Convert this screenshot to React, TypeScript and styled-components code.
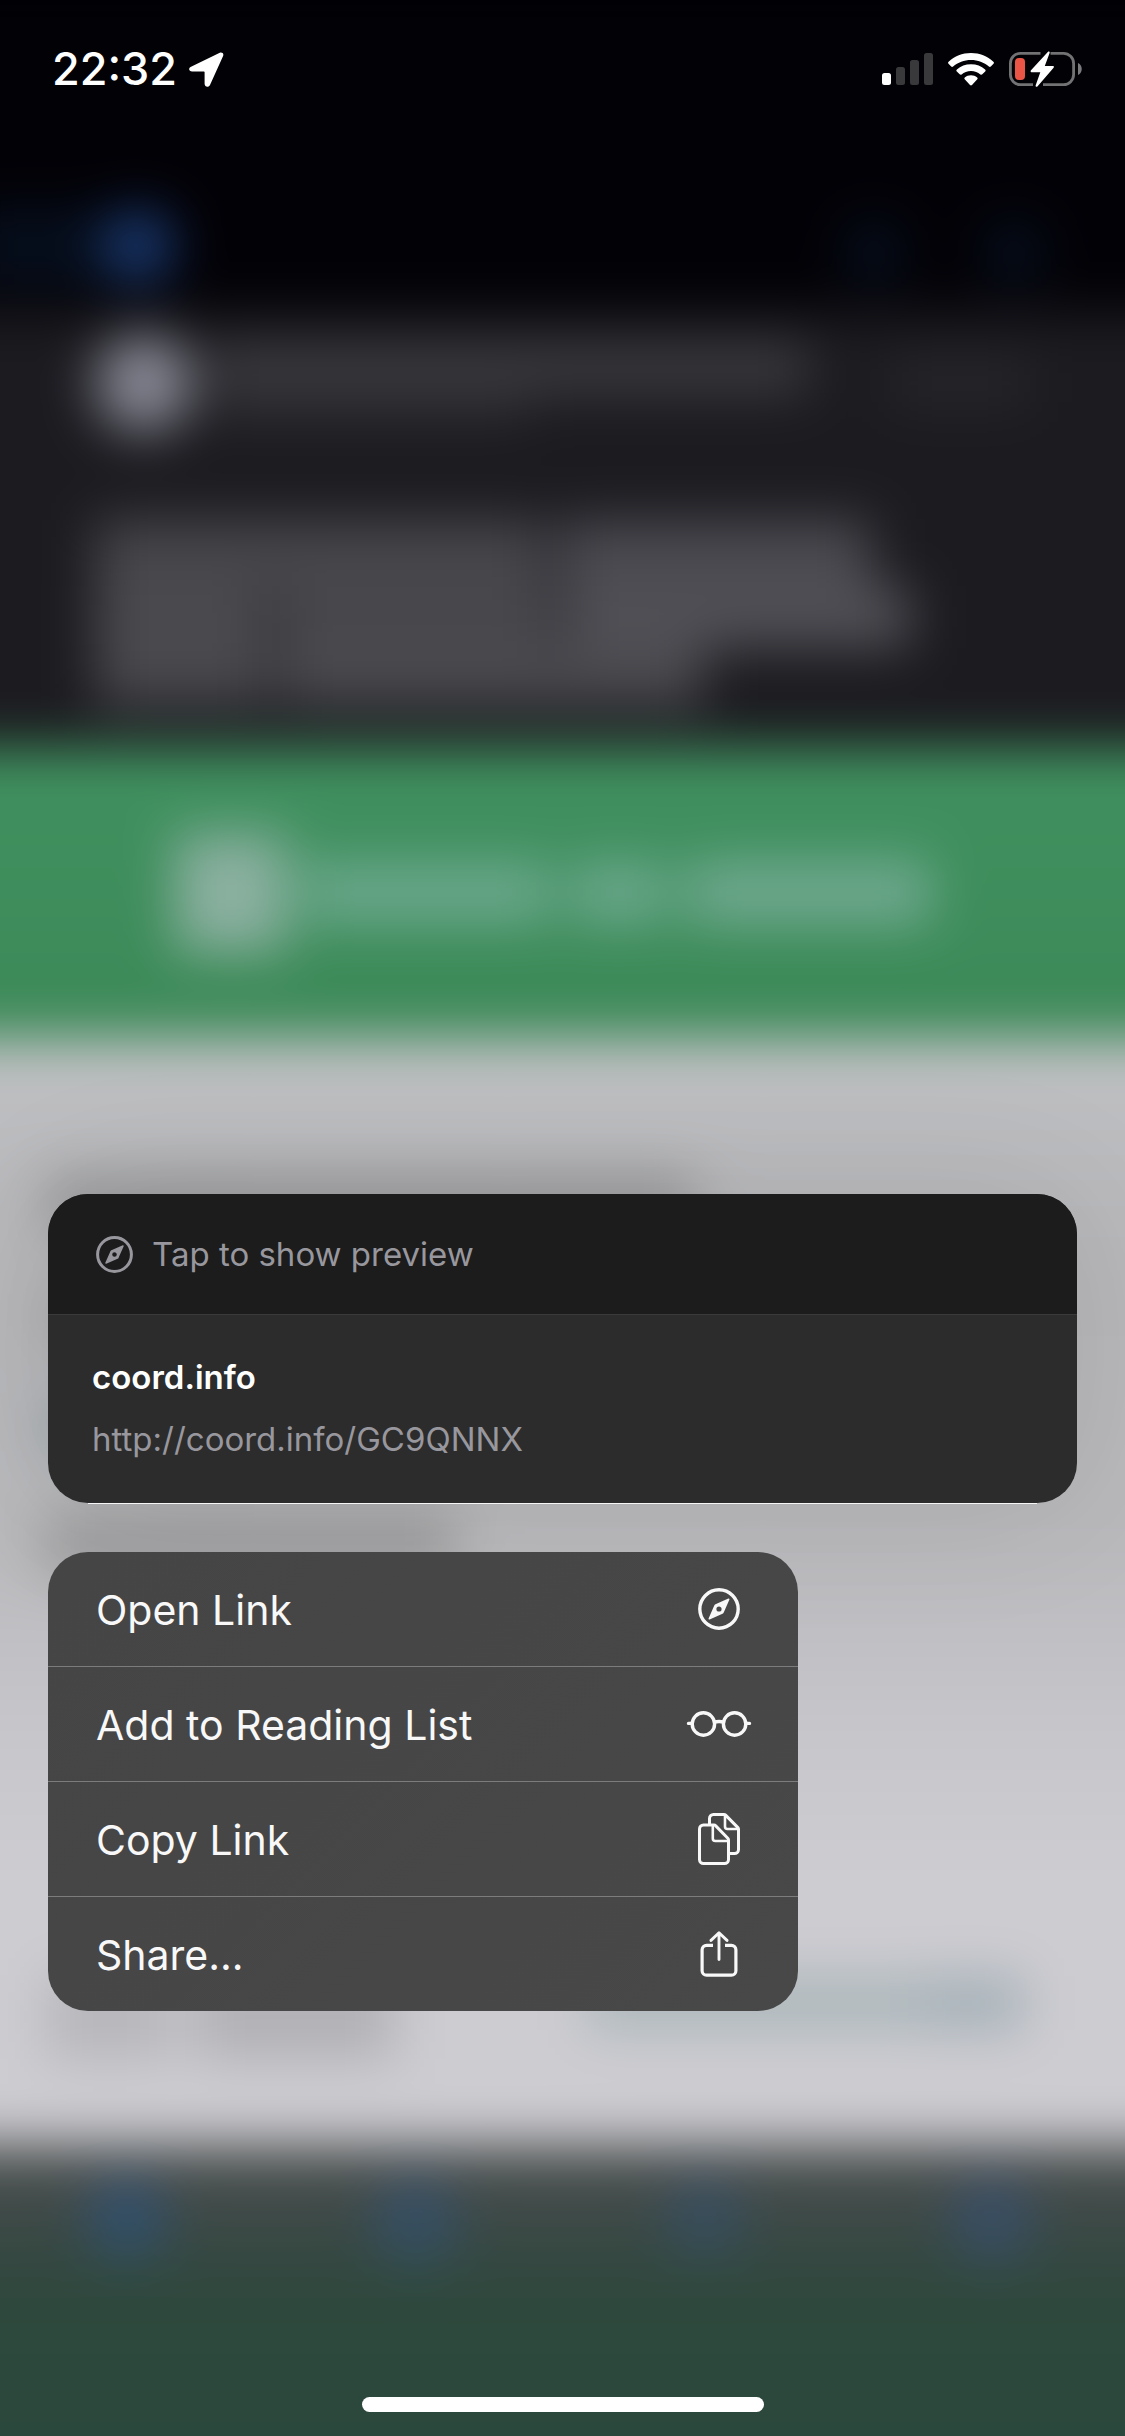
import React from "react";
import styled, { createGlobalStyle } from "styled-components";

const GlobalStyle = createGlobalStyle`
  *, *::before, *::after { box-sizing: border-box; }
  html, body { margin: 0; background: #020106; }
  body { font-family: Inter, Roboto, "Liberation Sans", sans-serif; }
  button { font: inherit; border: 0; margin: 0; cursor: pointer; }
  svg { display: block; flex: none; }
`;

const Screen = styled.div`
  position: relative;
  display: flex;
  flex-direction: column;
  min-height: 100vh;
  overflow: hidden;
  color: #fff;
`;

/* ---------- blurred page behind the menu ---------- */

const Backdrop = styled.div`
  position: absolute;
  inset: 0 -80px -80px;
  display: flex;
  flex-direction: column;
  background: #020106;
  filter: blur(26px);
`;

const NavStrip = styled.div`
  display: flex;
  align-items: flex-end;
  justify-content: space-between;
  height: 312px;
  padding: 0 160px 30px 0;
`;

const BackGroup = styled.div`
  display: flex;
  align-items: center;
  padding-left: 50px;
`;

const Faint = styled.div`
  width: 132px;
  height: 70px;
  background: #060f1e;
`;

const NavActions = styled.div`
  display: flex;
  gap: 78px;
`;

const Dot = styled.div<{ $size: number; $color: string }>`
  width: ${(p) => p.$size}px;
  height: ${(p) => p.$size}px;
  border-radius: 50%;
  background: ${(p) => p.$color};
`;

const MessageHeader = styled.div`
  display: flex;
  flex-direction: column;
  gap: 88px;
  height: 436px;
  padding: 22px 175px 0;
  background: #1c1b20;
`;

const Sender = styled.div`
  display: flex;
  gap: 16px;
  align-items: center;
`;

const Lines = styled.div`
  display: flex;
  flex-direction: column;
  align-items: flex-start;
  flex: 1;
`;

const Bar = styled.div<{ $w: number; $h: number; $color: string }>`
  width: ${(p) => p.$w}px;
  height: ${(p) => p.$h}px;
  background: ${(p) => p.$color};
`;

const Words = styled.div<{ $gap: number }>`
  display: flex;
  gap: ${(p) => p.$gap}px;
`;

const Banner = styled.div`
  display: flex;
  align-items: center;
  justify-content: center;
  gap: 14px;
  height: 290px;
  padding: 0 20px 0 0;
  background: linear-gradient(#409160, #3c8957);
`;

const Page = styled.div`
  display: flex;
  flex-direction: column;
  flex: 1;
  justify-content: space-between;
  padding: 134px 80px 86px 125px;
  background: linear-gradient(#bfc0c3, #b8b8bb 200px, #b9b9bc 500px, #c7c6cb 700px, #cdccd1 840px);
`;

const Paragraph = styled.div`
  display: flex;
  flex-direction: column;
  gap: 60px;
`;

const Split = styled.div`
  display: flex;
  justify-content: space-between;
  padding-right: 100px;
`;

const Toolbar = styled.div`
  display: flex;
  justify-content: space-between;
  align-items: flex-start;
  height: 371px;
  padding: 34px 172px 0 168px;
  background: linear-gradient(#505253, #3b4845 80px, #2d483c 160px, #2a473b);
`;

/* ---------- status bar ---------- */

const Foreground = styled.div`
  position: relative;
  display: flex;
  flex-direction: column;
  flex: 1;
`;

const StatusBar = styled.header`
  display: flex;
  align-items: center;
  justify-content: space-between;
  height: 138px;
  padding: 0 43px 0 52px;
`;

const StatusGroup = styled.div<{ $gap: number }>`
  display: flex;
  align-items: center;
  gap: ${(p) => p.$gap}px;
`;

const Clock = styled.time`
  font-size: 45px;
  line-height: 56px;
  font-weight: 500;
`;

/* ---------- preview card and menu ---------- */

const Main = styled.main`
  display: flex;
  flex-direction: column;
  justify-content: flex-end;
  flex: 1;
  padding: 0 48px 386px;
`;

const PreviewCard = styled.section`
  overflow: hidden;
  border-radius: 40px;
  background: #2c2c2c;
  box-shadow: 0 0 140px rgba(0, 0, 0, 0.1);
`;

const PreviewToggle = styled.button`
  display: flex;
  align-items: center;
  gap: 19px;
  width: 100%;
  height: 121px;
  padding: 0 48px;
  border-bottom: 1px solid #3a3a3b;
  background: #1c1c1c;
  color: #98979e;
  font-size: 33px;
  line-height: 62px;
`;

const LinkInfo = styled.a`
  display: flex;
  flex-direction: column;
  height: 188px;
  padding: 31px 44px;
  color: #98979e;
  font-size: 33px;
  line-height: 62px;
  text-decoration: none;
`;

const Domain = styled.strong`
  color: #fff;
  font-weight: 600;
`;

const Highlight = styled.div`
  height: 1px;
  margin: 0 40px 48px;
  background: #f6f6f8;
`;

const Menu = styled.ul`
  width: 750px;
  max-width: 100%;
  margin: 0;
  padding: 0;
  overflow: hidden;
  list-style: none;
  border-radius: 40px;
  background: linear-gradient(135deg, #454546, #484849);
`;

const MenuItem = styled.li`
  & + & {
    border-top: 1px solid #7c7c7e;
  }
`;

const MenuButton = styled.button`
  display: flex;
  align-items: center;
  justify-content: space-between;
  width: 100%;
  height: 114px;
  padding: 0 46px 0 48px;
  background: none;
  color: #f8f8f8;
  font-size: 41px;
  line-height: 52px;
`;

const MenuLabel = styled.span`
  padding-top: 2px;
`;

const IconSlot = styled.span`
  display: flex;
  justify-content: center;
  width: 66px;
`;

const HomeArea = styled.footer`
  display: flex;
  justify-content: center;
  padding-bottom: 24px;
`;

const HomeIndicator = styled.div`
  width: 402px;
  height: 15px;
  border-radius: 8px;
  background: #fff;
`;

/* ---------- icons ---------- */

const CompassIcon = ({ size }: { size: number }) => (
  <svg width={size} height={size} viewBox="0 0 42 42" fill="none" aria-hidden="true">
    <circle cx="21" cy="21" r="19.2" stroke="currentColor" strokeWidth="3.4" />
    <path
      fillRule="evenodd"
      fill="currentColor"
      stroke="currentColor"
      strokeWidth="1.6"
      strokeLinejoin="round"
      d="M30.7 11.3 25 24.2q-.3.6-.8.9L11.3 30.7 17 17.8q.3-.6.8-.9ZM21 17.6a3.4 3.4 0 1 0 0 6.8 3.4 3.4 0 0 0 0-6.8Z"
    />
  </svg>
);

const GlassesIcon = () => (
  <svg width="66" height="28" viewBox="0 0 66 28" fill="none" stroke="currentColor" strokeWidth="3.4" aria-hidden="true">
    <circle cx="17.400" cy="14" r="11.200" />
    <circle cx="48.600" cy="14" r="11.200" />
    <path d="M28 12.200Q33 10.800 38 12.200" />
    <path d="M2.500 13.400H6M60 13.400H63.500" strokeLinecap="round" />
  </svg>
);

const CopyIcon = () => (
  <svg width="42" height="52" viewBox="0 0 42 52" fill="none" stroke="currentColor" strokeWidth="3" strokeLinejoin="round" aria-hidden="true">
    <path d="M16 12H5.500a4 4 0 0 0-4 4V46.500a4 4 0 0 0 4 4H26.500a4 4 0 0 0 4-4V27Q30.500 26 29.800 25.300L17.500 12.600Q17 12 16 12Z" />
    <path d="M14.800 12.500V25.500Q14.800 28 17.300 28H30" strokeWidth="2.600" />
    <path d="M11.500 11V5.500a4 4 0 0 1 4-4H26Q27 1.500 27.600 2.100L39.900 14.600Q40.500 15.200 40.500 16.200V36.500a4 4 0 0 1-4 4H32" />
    <path d="M27 2.500V13.500Q27 16 29.500 16H40" strokeWidth="2.600" />
  </svg>
);

const ShareIcon = () => (
  <svg width="38" height="46" viewBox="0 0 38 46" fill="none" stroke="currentColor" strokeWidth="3.2" aria-hidden="true">
    <path d="M13 14.300H6.600a4.500 4.500 0 0 0-4.500 4.500V39.700a4.500 4.500 0 0 0 4.500 4.500H31.400a4.500 4.500 0 0 0 4.500-4.500V18.800a4.500 4.500 0 0 0-4.500-4.500H25" />
    <path d="M19 2.400V28.500M11 9.400 19 1.700 27 9.400" strokeWidth="2.900" strokeLinecap="round" strokeLinejoin="round" />
  </svg>
);

const LocationIcon = () => (
  <svg width="35" height="35" viewBox="0 0 35 35" aria-hidden="true">
    <path
      fill="#fff"
      d="M2 14.700 30.800.7c2-.9 4.400.7 3.300 3.300L21 33c-1.200 2.700-5.400 2.300-5.400-1.200V20.200c0-.5-.2-.7-.7-.7H3.200C-.4 19.500-.8 16 2 14.700Z"
    />
  </svg>
);

const SignalIcon = () => (
  <svg width="51" height="32" viewBox="0 0 51 32" aria-label="Signal" role="img">
    <rect x="0" y="20" width="9" height="12" rx="2.500" fill="#fff" />
    <rect x="14" y="14" width="9" height="18" rx="2.500" fill="#39393b" />
    <rect x="28" y="7" width="9" height="25" rx="2.500" fill="#39393b" />
    <rect x="42" y="0" width="9" height="32" rx="2.500" fill="#39393b" />
  </svg>
);

const WifiIcon = () => (
  <svg width="46" height="33" viewBox="0 0 46 33" fill="#fff" aria-label="Wi-Fi" role="img">
    <path d="M23 0C14.300 0 6.500 3.300.6 8.700c-.7.6-.7 1.400-.1 2L3.200 13.500c.6.600 1.300.6 1.900 0C9.900 9.300 16.100 6.900 23 6.900s13.100 2.400 17.900 6.600c.6.6 1.300.6 1.900 0l2.700-2.800c.6-.6.600-1.400-.1-2C39.500 3.300 31.700 0 23 0Z" />
    <path d="M23 11.200c-5.500 0-10.300 1.900-14.100 5.200-.7.600-.7 1.400-.1 2l2.900 2.900c.6.600 1.300.6 1.900.1 2.500-2.100 5.700-3.400 9.400-3.400s6.900 1.300 9.400 3.400c.6.500 1.300.5 1.900-.1l2.900-2.900c.6-.6.600-1.400-.1-2-3.800-3.300-8.600-5.200-14.100-5.200Z" />
    <path d="M23 22.200c-2.400 0-4.500.8-6.200 2.200-.6.500-.6 1.200-.1 1.800l5.300 5.900c.6.600 1.400.6 2 0l5.300-5.900c.5-.6.500-1.300-.1-1.800-1.700-1.400-3.800-2.200-6.200-2.200Z" />
  </svg>
);

const BatteryIcon = () => (
  <svg width="73" height="36" viewBox="0 0 73 36" aria-label="Battery charging" role="img">
    <g fill="none" stroke="#727274" strokeWidth="2.800">
      <path d="M31.500 2.400H11.400a10 10 0 0 0-10 10V23.600a10 10 0 0 0 10 10H24" />
      <path d="M41.500 2.400H54.600a10 10 0 0 1 10 10V23.600a10 10 0 0 1-10 10H34" />
    </g>
    <path d="M69 12c5 2.200 5 10 0 12Z" fill="#7b7b7d" />
    <rect x="6" y="7" width="10" height="22" rx="4" fill="#eb5545" />
    <path
      fill="#fff"
      d="M38.800.9 22 19.300c-.8.900-.3 1.900.8 1.900h8.500l-4.600 13c-.5 1.500.9 2.200 1.900 1.100l16-18.600c.7-.9.200-1.800-.8-1.800h-8l4.800-12.900c.5-1.400-.9-2.200-1.800-1.100Z"
    />
  </svg>
);

const actions = [
  { label: "Open Link", icon: <CompassIcon size={42} /> },
  { label: "Add to Reading List", icon: <GlassesIcon /> },
  { label: "Copy Link", icon: <CopyIcon /> },
  { label: "Share...", icon: <ShareIcon /> },
];

export default function App() {
  return (
    <Screen>
      <GlobalStyle />
      <Backdrop aria-hidden="true">
        <NavStrip>
          <BackGroup>
            <Faint />
            <Dot $size={72} $color="#1b3c76" />
          </BackGroup>
          <NavActions>
            <Dot $size={62} $color="#07101f" />
            <Dot $size={62} $color="#07101f" />
          </NavActions>
        </NavStrip>
        <MessageHeader>
          <Sender>
            <Dot $size={98} $color="#868793" />
            <Lines>
              <Bar $w={600} $h={52} $color="#3a393e" />
              <Bar $w={320} $h={30} $color="#2a292e" />
            </Lines>
            <Bar $w={140} $h={44} $color="#27262b" />
          </Sender>
          <Lines>
            <Words $gap={14}>
              <Bar $w={450} $h={66} $color="#47464b" />
              <Bar $w={312} $h={66} $color="#4b4a50" />
            </Words>
            <Words $gap={10}>
              <Bar $w={170} $h={62} $color="#4b4a4f" />
              <Bar $w={280} $h={62} $color="#48474c" />
              <Bar $w={346} $h={62} $color="#515056" />
            </Words>
            <Words $gap={10}>
              <Bar $w={175} $h={58} $color="#49484d" />
              <Bar $w={424} $h={58} $color="#4b4a4f" />
            </Words>
          </Lines>
        </MessageHeader>
        <Banner>
          <Bar $w={112} $h={118} $color="#8bb0a0" />
          <Words $gap={20}>
            <Bar $w={250} $h={64} $color="#69a78b" />
            <Bar $w={96} $h={64} $color="#69a78b" />
            <Bar $w={244} $h={64} $color="#70a990" />
          </Words>
        </Banner>
        <Page>
          <Paragraph>
            <Bar $w={650} $h={60} $color="#9b9b9d" />
            <Bar $w={800} $h={50} $color="#a9a9ab" />
            <Bar $w={900} $h={50} $color="#9ba7ab" />
            <Bar $w={410} $h={66} $color="#9d9d9f" />
          </Paragraph>
          <Split>
            <Words $gap={20}>
              <Bar $w={130} $h={84} $color="#b7b6bb" />
              <Bar $w={200} $h={84} $color="#b1b0b5" />
            </Words>
            <Words $gap={0}>
              <Bar $w={340} $h={56} $color="#acb7bb" />
              <Bar $w={100} $h={56} $color="#a5b1b8" />
            </Words>
          </Split>
        </Page>
        <Toolbar>
          <Dot $size={78} $color="#31506e" />
          <Dot $size={84} $color="#354f65" />
          <Dot $size={76} $color="#374e60" />
          <Dot $size={82} $color="#384e66" />
        </Toolbar>
      </Backdrop>

      <Foreground>
        <StatusBar>
          <StatusGroup $gap={12}>
            <Clock>22:32</Clock>
            <LocationIcon />
          </StatusGroup>
          <StatusGroup $gap={15}>
            <SignalIcon />
            <WifiIcon />
            <BatteryIcon />
          </StatusGroup>
        </StatusBar>

        <Main>
          <PreviewCard>
            <PreviewToggle type="button">
              <CompassIcon size={37} />
              Tap to show preview
            </PreviewToggle>
            <LinkInfo href="http://coord.info/GC9QNNX">
              <Domain>coord.info</Domain>
              <span>http://coord.info/GC9QNNX</span>
            </LinkInfo>
          </PreviewCard>
          <Highlight />
          <Menu>
            {actions.map((action) => (
              <MenuItem key={action.label}>
                <MenuButton type="button">
                  <MenuLabel>{action.label}</MenuLabel>
                  <IconSlot>{action.icon}</IconSlot>
                </MenuButton>
              </MenuItem>
            ))}
          </Menu>
        </Main>

        <HomeArea>
          <HomeIndicator />
        </HomeArea>
      </Foreground>
    </Screen>
  );
}
